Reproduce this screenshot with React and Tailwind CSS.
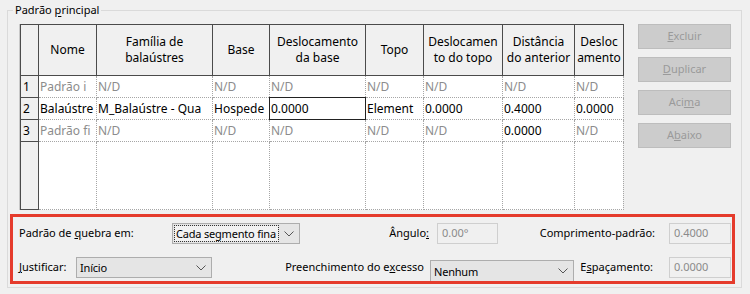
const FONT = { fontFamily: '"Segoe UI", "Noto Sans", sans-serif' }

const cols = [18, 58, 116, 57, 96, 58, 79, 72, 49]

const headers = [
  [''],
  ['Nome'],
  ['Família de', 'balaústres'],
  ['Base'],
  ['Deslocamento', 'da base'],
  ['Topo'],
  ['Deslocamen', 'to do topo'],
  ['Distância', 'do anterior'],
  ['Desloc', 'amento'],
]

// texts as the narrow columns show them
const rows = [
  { n: 1, cells: ['Padrão i', 'N/D', 'N/D', 'N/D', 'N/D', 'N/D', 'N/D', 'N/D'], dim: [true, true, true, true, true, true, true, true] },
  { n: 2, cells: ['Balaústre', 'M_Balaústre - Qua', 'Hospede', '0.0000', 'Element', '0.0000', '0.4000', '0.0000'], dim: [] },
  { n: 3, cells: ['Padrão fi', 'N/D', 'N/D', 'N/D', 'N/D', 'N/D', '0.0000', 'N/D'], dim: [true, true, true, true, true, true, false, true] },
]

function Chevron() {
  return (
    <svg width="10" height="6" viewBox="0 0 10 6" className="shrink-0">
      <polyline points="0.5,0.5 5,5 9.5,0.5" fill="none" stroke="#555" strokeWidth="1" />
    </svg>
  )
}

function Select({ value, width, focus, className = '' }) {
  return (
    <div
      className={`flex items-center h-[21px] border border-[#adadad] bg-[#e5e5e5] pl-[2px] pr-[5px] ${width} ${className}`}
    >
      <span
        className={`flex-1 min-w-0 overflow-hidden whitespace-nowrap text-black leading-[15px] px-[1px] tracking-[-0.2px] ${focus ? 'outline outline-1 outline-dotted outline-[#333] bg-[#f2f2f2]' : ''}`}
      >
        {value}
      </span>
      <span className="ml-[6px]"><Chevron /></span>
    </div>
  )
}

function Field({ value, width }) {
  return (
    <div className={`h-[21px] border border-[#cfcfcf] bg-[#f0f0f0] px-[4px] flex items-center text-[#8a8a8a] ${width}`}>
      {value}
    </div>
  )
}

function SideButton({ children }) {
  return (
    <div className="h-[25px] w-[93px] border border-[#bdbdbd] bg-[#cccccc] text-[#9a9a9a] flex items-center justify-center">
      {children}
    </div>
  )
}

export default function App() {
  return (
    <div className="w-[750px] h-[294px] bg-[#f0f0f0] overflow-hidden text-[11px] text-black relative" style={FONT}>
      <span className="absolute left-[13px] top-[2px] px-[2px] bg-[#f0f0f0] leading-[16px]">
        Padrão <u className="underline-offset-2">p</u>rincipal
      </span>
      <div className="ml-[7px] mt-[10px] w-[735px] h-[278px] border border-[#dadada] pt-[13px]">
        <div className="flex ml-[11px]">
          <div className="h-[186px] w-[604px] shrink-0 bg-white border-l border-[#c8c8c8]">
            <table className="w-[603px] table-fixed border-collapse text-[12px] leading-[16px]">
              <colgroup>
                {cols.map((w, i) => (
                  <col key={i} style={{ width: w }} />
                ))}
              </colgroup>
              <thead>
                <tr className="h-[51px]">
                  {headers.map((h, i) => (
                    <th
                      key={i}
                      className="border border-[#4b4b4b] bg-[#f0f0f0] font-normal text-center p-0 overflow-hidden whitespace-nowrap"
                    >
                      {h.map((line, j) => (
                        <div key={j}>{line}</div>
                      ))}
                    </th>
                  ))}
                </tr>
              </thead>
              <tbody>
                {rows.map((r) => (
                  <tr key={r.n} className="h-[22px]">
                    <td className="border border-[#4b4b4b] bg-[#f0f0f0] pl-[2px] p-0">{r.n}</td>
                    {r.cells.map((c, i) => (
                      <td
                        key={i}
                        className={`p-0 pl-[1px] whitespace-nowrap overflow-hidden ${
                          r.n === 2 && i === 3
                            ? 'border border-[#222]'
                            : 'border border-dotted border-[#a6a6a6]'
                        } ${r.dim[i] ? 'text-[#8c8c8c]' : 'text-black'}`}
                      >
                        <div className="overflow-hidden whitespace-nowrap">{c}</div>
                      </td>
                    ))}
                  </tr>
                ))}
                <tr className="h-[68px]">
                  <td className="border border-[#4b4b4b] bg-[#f0f0f0] p-0"></td>
                  {cols.slice(1).map((_, i) => (
                    <td key={i} className="border border-dotted border-[#a6a6a6] p-0"></td>
                  ))}
                </tr>
              </tbody>
            </table>
          </div>
          <div className="ml-[15px] flex flex-col gap-[8px]">
            <SideButton><u>E</u>xcluir</SideButton>
            <SideButton><u>D</u>uplicar</SideButton>
            <SideButton>Aci<u>m</u>a</SideButton>
            <SideButton>A<u>b</u>aixo</SideButton>
          </div>
        </div>

        <div className="ml-[2px] mt-[4px] w-[725px] h-[70px] border-[3px] border-[#e53b2c] overflow-hidden pl-[6px] pt-[6px]">
          <div className="flex items-center h-[21px]">
            <div className="w-[153px]">Padrão de <u>q</u>uebra em:</div>
            <Select value="Cada segmento fina" width="w-[128px]" focus />
            <div className="w-[129px] text-right">Ângulo<u>:</u></div>
            <div className="w-[8px]" />
            <Field value="0.00°" width="w-[61px]" />
            <div className="w-[157px] text-right whitespace-nowrap">Comprimento-padrão:</div>
            <div className="w-[14px]" />
            <Field value="0.4000" width="w-[62px]" />
          </div>
          <div className="flex items-start h-[24px] mt-[13px]">
            <div className="w-[57px] h-[21px] flex items-center"><u>J</u>ustificar:</div>
            <Select value="Início" width="w-[136px]" />
            <div className="w-[212px] h-[21px] flex items-center justify-end">Preenchimento do e<u>x</u>cesso</div>
            <div className="w-[6px]" />
            <Select value="Nenhum" width="w-[144px]" className="mt-[3px] h-[22px]" />
            <div className="w-[79px] h-[21px] flex items-center justify-end">E<u>s</u>paçamento:</div>
            <div className="w-[16px]" />
            <Field value="0.0000" width="w-[62px]" />
          </div>
        </div>
      </div>
    </div>
  )
}
